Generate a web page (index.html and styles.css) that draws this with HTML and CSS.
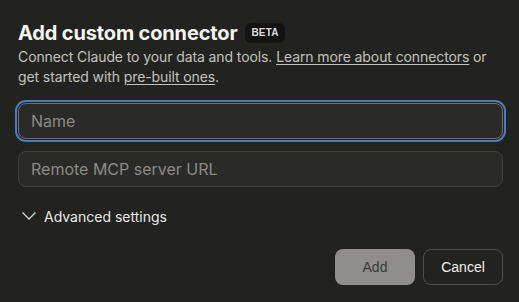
FILE: index.html
```html
<!DOCTYPE html>
<html>
<head>
<meta charset="utf-8">
<link rel="stylesheet" href="styles.css">
</head>
<body>
<div class="dialog">
  <div class="head">
    <h1 class="title">Add custom connector <span class="badge">BETA</span></h1>
    <p class="desc">Connect Claude to your data and tools. <a href="#">Learn more about connectors</a> or get started with <a href="#">pre-built ones</a>.</p>
  </div>
  <div class="fields">
    <div class="input focus">Name</div>
    <div class="input">Remote MCP server URL</div>
  </div>
  <div class="advanced">
    <svg class="chev" width="16" height="10" viewBox="0 0 16 10"><path d="M1.5 1.5 L8 8 L14.5 1.5" fill="none" stroke="#d8d7d2" stroke-width="1.3"/></svg>
    <span>Advanced settings</span>
  </div>
  <div class="actions">
    <button class="btn add">Add</button>
    <button class="btn cancel">Cancel</button>
  </div>
</div>
</body>
</html>
```

FILE: styles.css
```css
html, body {
  margin: 0;
  padding: 0;
  background: #222221;
  width: 519px;
  height: 302px;
  overflow: hidden;
}
.dialog {
  padding: 19px 16px 0 18px;
  font-family: Inter, "Noto Sans", sans-serif;
}
.title {
  margin: 0;
  font-size: 20px;
  line-height: 28px;
  font-weight: 700;
  color: #f7f6f1;
  display: flex;
  align-items: center;
  gap: 8px;
  letter-spacing: -0.15px;
}
.badge {
  display: inline-block;
  height: 20px;
  line-height: 20px;
  padding: 0 6px;
  border-radius: 6px;
  background: #121212;
  color: #dcdbd5;
  font-size: 10px;
  font-weight: 600;
  letter-spacing: 0.2px;
  font-family: "Liberation Sans", Arial, sans-serif;
}
.desc {
  margin: 0;
  font-size: 14px;
  line-height: 20px;
  color: #c3c2bb;
  letter-spacing: -0.1px;
}
.desc a {
  color: #c3c2bb;
  text-decoration: underline;
  text-underline-offset: 2px;
}
.fields {
  margin-top: 16px;
  display: flex;
  flex-direction: column;
  gap: 12px;
}
.input {
  height: 36px;
  box-sizing: border-box;
  border: 1px solid #3f3f3d;
  border-radius: 8px;
  background: #2a2a29;
  color: #8b8a85;
  font-size: 16px;
  line-height: 34px;
  padding: 0 12px;
}
.input.focus {
  border-color: #6e6d6a;
  box-shadow: 0 0 0 1px #222221, 0 0 0 3px #4c79c0;
}
.advanced {
  margin-top: 19px;
  height: 20px;
  display: flex;
  align-items: center;
  gap: 7px;
  padding-left: 3px;
  color: #ebeae5;
  font-size: 14px;
}
.chev {
  display: block;
}
.actions {
  margin-top: 23px;
  display: flex;
  justify-content: flex-end;
  gap: 8px;
}
.btn {
  width: 80px;
  height: 36px;
  border-radius: 8px;
  font-family: "Liberation Sans", Arial, sans-serif;
  font-size: 14px;
  box-sizing: border-box;
}
.add {
  background: #8f8e8b;
  color: #3a3a38;
  border: none;
}
.cancel {
  background: #222221;
  color: #f2f1ec;
  border: 1px solid #4d4d4b;
}
```
